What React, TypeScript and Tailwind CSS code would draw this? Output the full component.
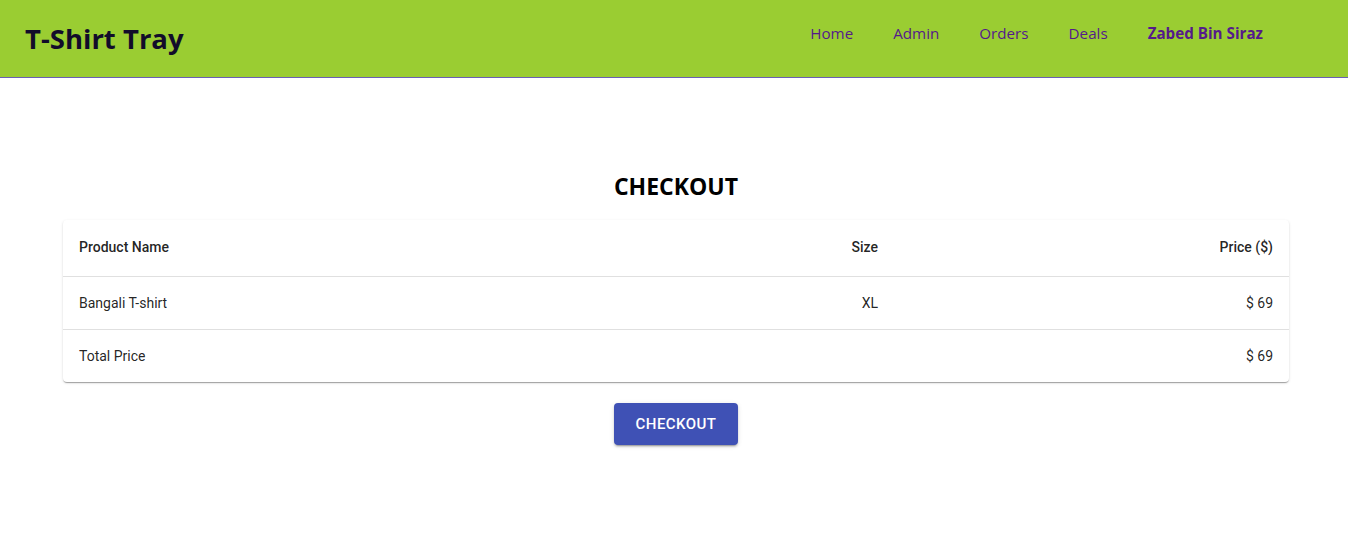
export default function App() {
  const seg = { fontFamily: '"Open Sans", "Noto Sans", sans-serif' };
  const rob = { fontFamily: 'Roboto, "Liberation Sans", sans-serif' };
  return (
    <div className="min-h-[543px] bg-white">
      <header
        className="flex h-[78px] items-center justify-between border-b border-[#6a5fb5] bg-[#9acd32] pl-[25px] pr-[85px]"
        style={seg}
      >
        <h1 className="text-[27.5px] font-bold text-[#120c2a]">T-Shirt Tray</h1>
        <nav className="mb-[11px] flex items-center gap-[40px] text-[15.2px] font-normal text-[#551a8b]">
          <span>Home</span>
          <span>Admin</span>
          <span>Orders</span>
          <span>Deals</span>
          <span className="font-bold">Zabed Bin Siraz</span>
        </nav>
      </header>
      <main className="flex flex-col items-center pl-[4px] pt-[93px]">
        <h2 className="text-[23px] font-bold leading-[30px] text-black" style={seg}>
          CHECKOUT
        </h2>
        <div
          className="mt-[19px] w-[1226px] rounded-[4px] bg-white shadow-[0_2px_1px_-1px_rgba(0,0,0,0.2),0_1px_1px_0_rgba(0,0,0,0.14),0_1px_3px_0_rgba(0,0,0,0.12)]"
          style={rob}
        >
          <div className="grid grid-cols-[700px_131px_395px] border-b border-[#e0e0e0] text-[14px] font-medium leading-[24px] text-[rgba(0,0,0,0.87)]">
            <div className="px-4 pb-[17px] pt-[15px]">Product Name</div>
            <div className="px-4 pb-[17px] pt-[15px] text-right">Size</div>
            <div className="px-4 pb-[17px] pt-[15px] text-right">Price ($)</div>
          </div>
          <div className="grid grid-cols-[700px_131px_395px] border-b border-[#e0e0e0] text-[14px] leading-[20px] text-[rgba(0,0,0,0.87)]">
            <div className="p-4">Bangali T-shirt</div>
            <div className="p-4 text-right">XL</div>
            <div className="p-4 text-right">$ 69</div>
          </div>
          <div className="grid grid-cols-[700px_131px_395px] text-[14px] leading-[20px] text-[rgba(0,0,0,0.87)]">
            <div className="p-4">Total Price</div>
            <div className="p-4 text-right"></div>
            <div className="p-4 text-right">$ 69</div>
          </div>
        </div>
        <button
          className="mt-[21px] rounded-[4px] bg-[#3f51b5] px-[22px] py-[8px] text-[15px] font-medium uppercase leading-[26px] tracking-[0.46px] text-white shadow-[0_3px_1px_-2px_rgba(0,0,0,0.2),0_2px_2px_0_rgba(0,0,0,0.14),0_1px_5px_0_rgba(0,0,0,0.12)]"
          style={rob}
        >
          Checkout
        </button>
      </main>
    </div>
  );
}
